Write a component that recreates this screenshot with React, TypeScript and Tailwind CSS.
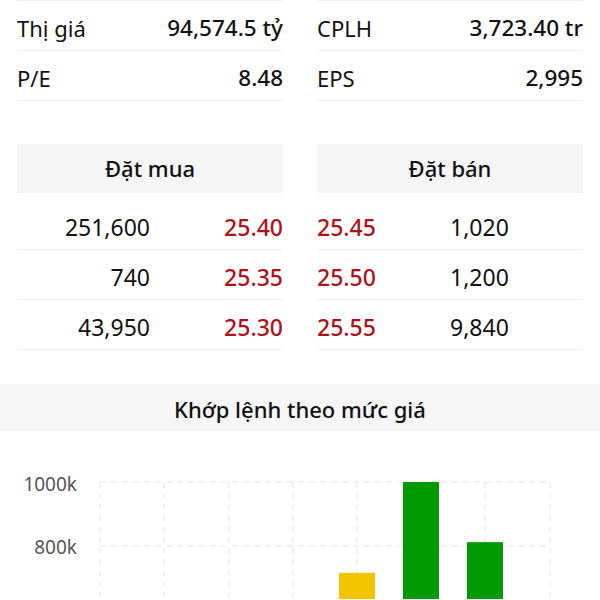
const stats = [
  [
    { label: 'Thị giá', value: '94,574.5 tỷ' },
    { label: 'P/E', value: '8.48' },
  ],
  [
    { label: 'CPLH', value: '3,723.40 tr' },
    { label: 'EPS', value: '2,995' },
  ],
];

const bids = [
  { vol: '251,600', price: '25.40' },
  { vol: '740', price: '25.35' },
  { vol: '43,950', price: '25.30' },
];

const asks = [
  { price: '25.45', vol: '1,020' },
  { price: '25.50', vol: '1,200' },
  { price: '25.55', vol: '9,840' },
];

const bars = [
  { x: 357, value: 716, color: '#f5c400' },
  { x: 421, value: 1000, color: '#009900' },
  { x: 485, value: 812, color: '#009900' },
];

function PriceChart() {
  const grid = [100, 164, 229, 293, 357, 421, 485, 550];
  const y = (v: number) => 803 - (v / 1000) * 320 - 432;
  return (
    <svg width="600" height="168" viewBox="0 0 600 168" className="block">
      {[1000, 800, 600].map((v) => (
        <line key={v} x1="100" x2="550" y1={y(v)} y2={y(v)} stroke="#e3e3e3" strokeDasharray="6 5" />
      ))}
      {grid.map((x) => (
        <line key={x} x1={x} x2={x} y1={y(1000)} y2="168" stroke="#e3e3e3" strokeDasharray="6 5" />
      ))}
      {bars.map((b) => (
        <rect key={b.x} x={b.x - 18} y={y(b.value)} width="36" height={168 - y(b.value)} fill={b.color} />
      ))}
      <text x="77" y={y(1000) + 9} textAnchor="end" fontSize="19" fill="#555" fontFamily="'Noto Sans', sans-serif">1000k</text>
      <text x="77" y={y(800) + 8} textAnchor="end" fontSize="19" fill="#555" fontFamily="'Noto Sans', sans-serif">800k</text>
    </svg>
  );
}

export default function App() {
  return (
    <div className="w-[600px] h-[600px] overflow-hidden bg-white text-[#111] font-['Noto_Sans',sans-serif]">
      <div className="grid grid-cols-2 gap-[34px] px-[17px]">
        {stats.map((col, i) => (
          <div key={i} className="border-t border-[#f0f0f0]">
            {col.map((s) => (
              <div key={s.label} className="flex h-[50px] items-center justify-between border-b border-[#f0f0f0] pt-[5px] text-[22px]">
                <span>{s.label}</span>
                <span className="font-medium text-[22.5px]">{s.value}</span>
              </div>
            ))}
          </div>
        ))}
      </div>

      <div className="mt-[43px] grid grid-cols-2 gap-[34px] px-[17px]">
        <div>
          <div className="flex h-[49px] items-center justify-center bg-[#f5f5f5] text-[22px] font-medium">Đặt mua</div>
          <div className="mt-[7px]">
            {bids.map((b) => (
              <div key={b.price} className="grid h-[50px] grid-cols-2 items-center border-b border-[#f0f0f0] pt-[5px] text-[23px]">
                <span className="text-right">{b.vol}</span>
                <span className="text-right font-medium text-[#b0101a]">{b.price}</span>
              </div>
            ))}
          </div>
        </div>
        <div>
          <div className="flex h-[49px] items-center justify-center bg-[#f5f5f5] text-[22px] font-medium">Đặt bán</div>
          <div className="mt-[7px]">
            {asks.map((a) => (
              <div key={a.price} className="grid h-[50px] grid-cols-2 items-center border-b border-[#f0f0f0] pt-[5px] text-[23px]">
                <span className="font-medium text-[#b0101a]">{a.price}</span>
                <span>{a.vol}</span>
              </div>
            ))}
          </div>
        </div>
      </div>

      <div className="mt-[34px] flex h-[47px] items-center justify-center bg-[#f6f6f6] pt-[3px] text-[22px] font-medium">
        Khớp lệnh theo mức giá
      </div>
      <PriceChart />
    </div>
  );
}
